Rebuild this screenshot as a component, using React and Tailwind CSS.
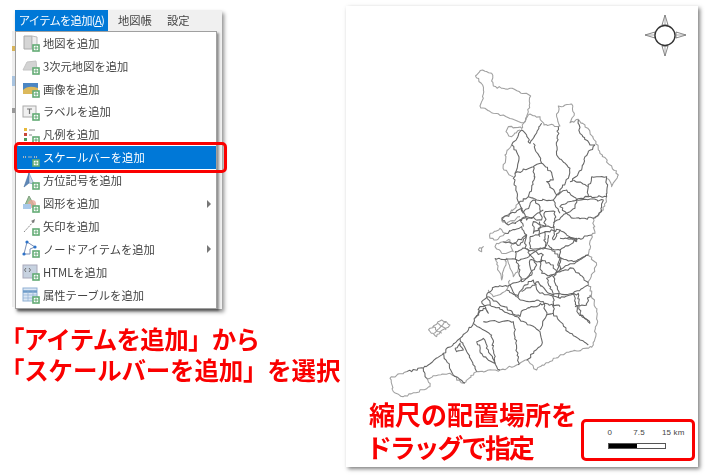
import React from "react";

const Badge = () => (
  <g>
    <rect x="11" y="11" width="6" height="6" fill="#fff" stroke="#62ab74" strokeWidth="1.6" />
    <path d="M14 12.2v3.6M12.2 14h3.6" stroke="#62ab74" strokeWidth="1.1" />
  </g>
);

const icons = {
  map: <><path d="M2 2h8v13H2z" fill="#d5d5d5" stroke="#aaa" /><path d="M10 2l5 1v11l-5 1z" fill="#eee" stroke="#bbb" /></>,
  map3d: <path d="M1 13l4-8 9-1 1 9z" fill="#d3d3d3" stroke="#c4c4c4" />,
  image: <><rect x="1" y="3" width="15" height="11" fill="#4b86c4" /><path d="M1 10c4-4 9-4 15-2v6H1z" fill="#dcb95c" /></>,
  label: <><rect x="1" y="3" width="13" height="11" fill="#f0f0f0" stroke="#aaa" /><path d="M5 6h5M7.5 6v5" stroke="#777" strokeWidth="1.2" /></>,
  legend: <><rect x="2" y="2" width="3" height="3" fill="#e8b93a" /><rect x="2" y="7" width="3" height="3" fill="#c8473a" /><rect x="2" y="12" width="3" height="3" fill="#4c9a58" /><path d="M7 4h6M7 9h3" stroke="#888" /></>,
  scale: <path d="M1 8h4M6.5 8h4M12 8h4" stroke="#a9b4bf" strokeWidth="2" strokeDasharray="1 1" />,
  north: <><path d="M7 1L2 15l5-4z" fill="#5f88b8" stroke="#446f9f" strokeWidth="0.6" /><path d="M7 1l5 11-5-1z" fill="#cdd9e6" stroke="#5f88b8" strokeWidth="0.6" /></>,
  shape: <><path d="M7 1l5 9H3z" fill="#9bc29a" stroke="#7f9f7e" /><circle cx="10" cy="9" r="4" fill="#e9a79a" opacity="0.8" /><rect x="1" y="9" width="8" height="5" fill="#a9c9ea" /></>,
  arrow: <><path d="M2 14L12 3" stroke="#888" strokeWidth="1" strokeDasharray="2 1" /><path d="M13 1l-1 4-3-2z" fill="#777" /></>,
  node: <><path d="M2 14L5 2l8 5-5 2 0 5z" fill="none" stroke="#7b8fb5" /><circle cx="2" cy="14" r="1.6" fill="#2e73c9" /><circle cx="5" cy="2" r="1.6" fill="#2e73c9" /><circle cx="13" cy="7" r="1.6" fill="#2e73c9" /></>,
  html: <><rect x="1" y="2" width="14" height="13" fill="#c7d2e0" stroke="#aab" /><path d="M4 5l-1.5 2L4 9M7 5l1.5 2L7 9" stroke="#555" fill="none" strokeWidth="0.8" /></>,
  table: <><rect x="1" y="2" width="14" height="13" fill="#dbe7f4" stroke="#8fb0d3" /><path d="M1 5.5h14" stroke="#6f9cc9" strokeWidth="2.5" /><path d="M1 9h14M1 12h14M6 5v10M11 5v10" stroke="#8fb0d3" strokeWidth="0.7" /></>,
};

const items = [
  ["map", "地図を追加"],
  ["map3d", "3次元地図を追加"],
  ["image", "画像を追加"],
  ["label", "ラベルを追加"],
  ["legend", "凡例を追加"],
  ["scale", "スケールバーを追加", false, true],
  ["north", "方位記号を追加"],
  ["shape", "図形を追加", true],
  ["arrow", "矢印を追加"],
  ["node", "ノードアイテムを追加", true],
  ["html", "HTMLを追加"],
  ["table", "属性テーブルを追加"],
];

function MenuItem({ icon, label, sub, active }) {
  return (
    <div className={`flex h-[22.9px] items-center pl-[6px] pr-[5px] ${active ? "bg-[#0078d7] text-white" : "text-[#444]"}`}>
      <svg width="18" height="18" viewBox="0 0 18 18" className="shrink-0">
        {icons[icon]}
        <Badge />
      </svg>
      <span className="ml-[3px] flex-1 text-[11.3px] leading-none">{label}</span>
      {sub && <span className="h-0 w-0 border-y-[4px] border-l-[4px] border-y-transparent border-l-[#777]" />}
    </div>
  );
}

function rng(seed) {
  let s = seed;
  return () => {
    s = (s * 9301 + 49297) % 233280;
    return s / 233280 - 0.5;
  };
}

function wiggle(pts, seed) {
  const r = rng(seed * 37 + 11);
  let d = `M${pts[0][0]} ${pts[0][1]}`;
  for (let i = 1; i < pts.length; i++) {
    const [x0, y0] = pts[i - 1];
    const [x1, y1] = pts[i];
    const n = Math.max(1, Math.round(Math.hypot(x1 - x0, y1 - y0) / 7));
    for (let k = 1; k <= n; k++) {
      const t = k / n;
      const j = k === n ? 0 : 7;
      d += `L${(x0 + (x1 - x0) * t + r() * j).toFixed(1)} ${(y0 + (y1 - y0) * t + r() * j).toFixed(1)}`;
    }
  }
  return d;
}

const b = (pts) => pts.map(([x, y]) => [x, y + 705]);

const light = [
  [[406,228],[428,210],[455,220],[460,258],[485,265],[510,265],[572,288],[565,335],[552,368],[530,362],[490,345],[460,340],[420,318],[430,295],[428,255],[406,228]],
  [[552,368],[570,342],[600,350],[612,375],[660,378],[650,350],[655,318],[695,312],[703,340],[690,368],[715,358],[735,375],[768,425],[780,460],[835,525],[815,560],[802,535]],
  [[552,368],[545,385],[505,380],[498,395],[515,410],[540,390]],
  [[515,435],[495,465],[492,510],[520,530]],
  [[535,610],[525,625],[485,660],[500,672],[540,650]],
  [[800,590],[790,630],[760,655],[765,700],[755,705]],
  b([[755,0],[745,60],[770,90],[745,145],[770,230],[770,270],[760,330],[745,340],[690,350],[640,370],[590,405],[560,375],[530,390],[480,405],[410,410],[370,445],[330,415],[260,430],[270,455],[190,485],[160,470],[150,430],[200,410]]),
  b([[265,285],[305,255],[330,270],[290,305],[265,285]]),
  b([[278,275],[305,295]]), b([[292,265],[318,285]]), b([[283,295],[318,262]]),
  b([[415,45],[430,35],[425,50],[415,45]]),
  [[465,775],[485,840],[500,775],[520,830],[540,795]],
  [[470,730],[510,720],[520,755],[485,760],[465,740],[470,730]],
  [[450,700],[480,685],[495,700],[470,720],[450,715],[450,700]],
  [[445,870],[460,890],[500,870],[510,840]],
];

const dark = [
  [[515,435],[545,390],[560,405],[570,430],[605,370]],
  [[515,435],[537,470],[525,520],[520,535],[530,575],[537,610],[550,640]],
  [[525,520],[580,500],[605,490],[580,430]],
  [[580,500],[582,540],[565,590],[535,610]],
  [[605,490],[635,518],[640,540],[620,545],[650,585],[685,535],[690,505],[650,465],[655,380]],
  [[690,545],[725,510],[735,470],[765,435]],
  [[715,360],[720,400],[750,435],[765,435]],
  [[700,540],[745,560],[745,590],[710,600],[680,570],[650,585],[640,600]],
  [[755,530],[800,530],[800,590],[745,590]],
  [[755,530],[745,560]],
  [[710,600],[790,600],[785,635],[760,655],[700,655],[680,640],[640,668]],
  [[565,590],[590,600],[640,600],[660,640]],
  [[550,640],[580,600],[600,620],[605,660],[560,650],[540,660],[550,680]],
  [[615,635],[645,635],[640,720]],
  [[615,635],[615,680],[580,665],[580,700],[610,680]],
  [[610,680],[645,680]],
  [[680,610],[710,600],[705,625],[680,640],[660,620],[680,610]],
  [[680,715],[710,715],[710,725]],
  [[485,655],[545,625],[560,660],[610,630]],
  [[485,655],[505,675],[555,655]],
  [[495,700],[545,680],[560,705],[520,730]],
  [[560,705],[555,745],[525,755]],
  [[555,745],[610,765],[605,785],[570,780],[575,825],[545,845],[535,800],[525,755]],
  [[570,710],[615,695],[615,745],[570,745],[570,710]],
  [[615,695],[660,690],[710,725]],
  [[615,745],[660,750],[710,720]],
  [[600,785],[605,820],[640,830],[660,810],[660,750]],
  [[550,860],[580,840],[600,880],[660,895],[640,830]],
  [[500,870],[535,890],[550,860]],
  [[445,890],[540,950],[550,930],[615,910],[660,920]],
  [[660,810],[710,785],[745,765]],
  [[660,895],[715,880],[720,940],[750,970]],
  [[405,955],[430,925],[445,940],[425,905],[445,890]],
  [[600,710],[598,665]],
  [[640,720],[660,690]],
  b([[465,70],[540,75],[570,60],[590,90],[560,130],[510,150]]),
  b([[490,20],[540,30],[560,0]]),
  b([[560,40],[570,60],[620,30],[625,0]]),
  b([[625,30],[660,70],[700,80],[745,60]]),
  b([[660,10],[700,15],[755,0]]),
  b([[660,70],[650,110],[700,100],[745,145]]),
  b([[600,75],[640,90],[650,110],[620,130],[640,180]]),
  b([[510,150],[525,180],[540,195]]),
  b([[545,170],[595,140],[620,170],[640,180]]),
  b([[250,400],[310,355],[360,310],[400,265],[420,215],[450,210],[440,180],[465,155],[510,150]]),
  b([[200,410],[250,400],[260,430]]),
  b([[310,355],[340,420],[375,445]]),
  b([[345,340],[360,325],[370,345],[350,350],[345,340]]),
  b([[360,310],[405,400],[410,410]]),
  b([[400,265],[455,300],[465,385],[480,405]]),
  b([[410,320],[430,310],[445,345],[465,385],[430,365],[410,320]]),
  b([[430,260],[520,260],[530,340],[535,390]]),
  b([[450,210],[520,240],[600,290],[605,330],[560,375]]),
  b([[540,195],[610,200],[620,240],[600,285]]),
  b([[620,240],[640,235],[690,295],[745,330]]),
  b([[640,235],[640,180],[700,175],[715,235],[750,265]]),
  b([[700,175],[745,150]]),
  b([[705,215],[740,210],[750,180]]),
];

function MapDrawing() {
  return (
    <svg width="352" height="461" viewBox="346 6 352 461" className="absolute left-0 top-0 blur-[0.35px]">
      <g transform="translate(340 0) scale(0.3333)" fill="none">
        {light.map((p, i) => <path key={i} d={wiggle(p, i + 1)} stroke="#a0a0a0" strokeWidth="3.2" strokeLinejoin="round" />)}
        {dark.map((p, i) => <path key={i} d={wiggle(p, i + 50)} stroke="#666666" strokeWidth="3.2" strokeLinejoin="round" />)}
      </g>
      <g fill="#fff" stroke="#555" strokeWidth="0.7">
        <path d="M665 15l3 10h-6zM665 56l3-10h-6zM645 35l10-3v6zM686 35l-10-3v6z" />
        <path d="M665 15v10M665 56V46M645 35h10M686 35H676" stroke="#888" />
        <circle cx="665" cy="35.5" r="10" strokeWidth="1.3" stroke="#333" />
      </g>
    </svg>
  );
}

export default function App() {
  return (
    <div className="relative flex h-[475px] w-[705px] overflow-hidden bg-white font-['Noto_Sans_CJK_JP','Noto_Sans',sans-serif]">
      <div className="flex w-[346px] shrink-0 flex-col">
        <div className="relative ml-[15px] mt-[10px] w-[207px] bg-[#f0f0f0] shadow-[2px_3px_4px_rgba(0,0,0,0.45)] blur-[0.45px]">
          <div className="absolute -left-[3px] top-[21px] flex h-[276px] w-[3px] flex-col bg-[#eeeeee] pt-[15px]">
            <div className="h-[5px] bg-[#d8b45a]" />
            <div className="mt-[25px] h-[10px] bg-[#a9c4e0]" />
            <div className="mt-[22px] h-[5px] bg-[#999999]" />
          </div>
          <div className="flex h-[21px] items-center text-[11.3px] text-[#444]">
            <div className="flex h-full w-[93px] items-center justify-center bg-[#0078d7] tracking-[-0.7px] text-white">アイテムを追加(<span className="underline">A</span>)</div>
            <span className="ml-[10px]">地図帳</span>
            <span className="ml-[15px]">設定</span>
          </div>
          <div className="w-[202px] border border-[#a0a0a0] bg-white pb-[1px] shadow-[2px_2px_2px_rgba(0,0,0,0.4)]">
            {items.map(([icon, label, sub, active]) => (
              <MenuItem key={label} icon={icon} label={label} sub={sub} active={active} />
            ))}
          </div>
        </div>
        <div className="ml-0 mt-[14px] text-[24.5px] font-bold leading-[31px] text-[#fa0000] whitespace-nowrap blur-[0.25px]">
          <div className="tracking-[-0.7px]">「アイテムを追加」から</div>
          <div className="tracking-[-0.2px]">「スケールバーを追加」を選択</div>
        </div>
      </div>

      <div className="relative mt-[6px] h-[461px] w-[352px] shrink-0 bg-white shadow-[2px_2px_4px_rgba(0,0,0,0.5)]">
        <MapDrawing />
        <div className="absolute left-[23px] top-[391px] text-[26px] font-bold leading-[33px] text-[#fa0000] whitespace-nowrap blur-[0.25px]">
          <div>縮尺の配置場所を</div>
          <div className="-ml-[3px] tracking-[-2.2px]">ドラッグで指定</div>
        </div>
        <div className="absolute left-[235px] top-[413px] flex h-[42px] w-[114px] flex-col rounded-[5px] border-[3px] border-[#fa0000] bg-white pl-[23.5px] pt-[5px] font-['Liberation_Sans',sans-serif] text-[#444]">
          <div className="flex h-[11px] items-center text-[8px] leading-none tracking-[0.2px]">
            <span>0</span>
            <span className="ml-[21px]">7.5</span>
            <span className="ml-[17px]">15 km</span>
          </div>
          <div className="mt-[4.5px] flex h-[6px] w-[58px] border border-[#555]">
            <div className="w-1/2 bg-black" />
            <div className="w-1/2 bg-white" />
          </div>
        </div>
      </div>

      <div className="absolute left-[14px] top-[142px] h-[31px] w-[213px] rounded-[5px] border-[3px] border-[#fa0000]" />
    </div>
  );
}
